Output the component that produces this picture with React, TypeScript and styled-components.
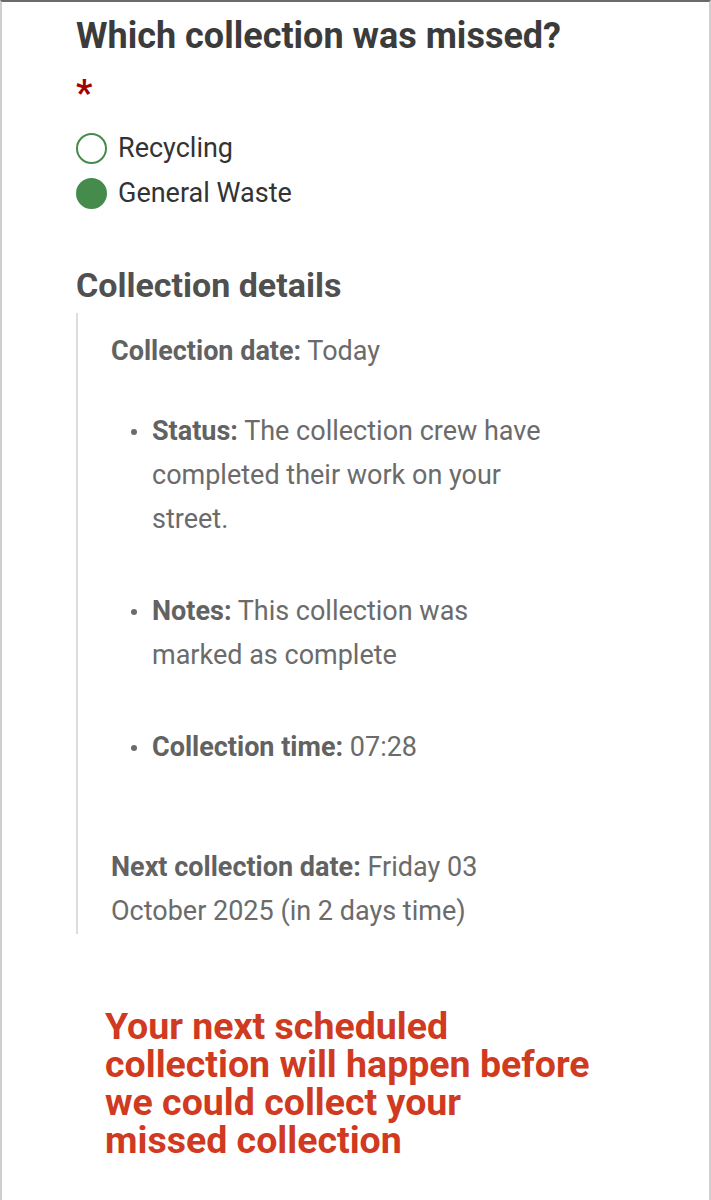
import styled, { createGlobalStyle } from "styled-components";

const GlobalStyle = createGlobalStyle`
  html, body {
    margin: 0;
    padding: 0;
    background: #ffffff;
  }
  body {
    font-family: Roboto, "Liberation Sans", Arial, sans-serif;
    -webkit-font-smoothing: antialiased;
  }
`;

const Page = styled.div`
  box-sizing: border-box;
  min-height: 1200px;
  border-top: 2px solid #6a6a6a;
  border-left: 2px solid #cfcfcf;
  border-right: 2px solid #cfcfcf;
  padding: 12px 24px 40px 74px;
  display: flex;
  flex-direction: column;
`;

const Question = styled.h2`
  margin: 0;
  font-size: 36px;
  line-height: 44px;
  font-weight: 700;
  color: #3b3b3b;
`;

const Required = styled.span`
  display: block;
  margin-top: 17px;
  font-size: 36px;
  line-height: 36px;
  font-weight: 700;
  color: #a30000;
`;

const Options = styled.div`
  display: flex;
  flex-direction: column;
  gap: 13px;
  margin-top: 21px;
`;

const Option = styled.label`
  display: flex;
  align-items: center;
  gap: 11px;
  font-size: 27px;
  line-height: 32px;
  color: #333333;
`;

const Radio = styled.span<{ $checked?: boolean }>`
  box-sizing: border-box;
  width: 31px;
  height: 31px;
  border-radius: 50%;
  border: 2px solid #458b4c;
  background: ${(p) => (p.$checked ? "#458b4c" : "#ffffff")};
  flex-shrink: 0;
`;

const SectionTitle = styled.h3`
  margin: 56px 0 0;
  font-size: 34px;
  line-height: 40px;
  font-weight: 700;
  color: #505050;
`;

const Details = styled.div`
  margin-top: 8px;
  border-left: 2px solid #dddddd;
  padding: 16px 0 1px 33px;
  max-width: 448px;
  display: flex;
  flex-direction: column;
  font-size: 27px;
  line-height: 44px;
  color: #6b6b6b;
`;

const Line = styled.p<{ $gap?: number }>`
  margin: ${(p) => p.$gap ?? 0}px 0 0;
`;

const Label = styled.b`
  font-weight: 700;
  color: #626262;
`;

const Facts = styled.ul`
  list-style: none;
  margin: 36px 0 0;
  padding: 0 0 0 20px;
  display: flex;
  flex-direction: column;
  gap: 48px;
`;

const Fact = styled.li`
  display: flex;
  align-items: flex-start;
  gap: 15px;
`;

const Dot = styled.span`
  width: 6px;
  height: 6px;
  border-radius: 50%;
  background: #6b6b6b;
  flex-shrink: 0;
  margin-top: 20px;
`;

const Warning = styled.p`
  margin: 73px 0 0 29px;
  max-width: 486px;
  font-size: 37.5px;
  line-height: 38px;
  font-weight: 700;
  color: #cf3a20;
`;

const facts = [
  { label: "Status:", text: "The collection crew have completed their work on your street." },
  { label: "Notes:", text: "This collection was marked as complete" },
  { label: "Collection time:", text: "07:28" },
];

const App: React.FC = () => {
  return (
    <>
      <GlobalStyle />
      <Page>
        <Question>Which collection was missed?</Question>
        <Required>*</Required>
        <Options>
          <Option>
            <Radio />
            Recycling
          </Option>
          <Option>
            <Radio $checked />
            General Waste
          </Option>
        </Options>

        <SectionTitle>Collection details</SectionTitle>
        <Details>
          <Line>
            <Label>Collection date:</Label> Today
          </Line>
          <Facts>
            {facts.map((f) => (
              <Fact key={f.label}>
                <Dot />
                <span>
                  <Label>{f.label}</Label> {f.text}
                </span>
              </Fact>
            ))}
          </Facts>
          <Line $gap={76}>
            <Label>Next collection date:</Label> Friday 03 October 2025 (in 2 days time)
          </Line>
        </Details>

        <Warning>
          Your next scheduled collection will happen before we could collect your missed collection
        </Warning>
      </Page>
    </>
  );
};

export default App;
